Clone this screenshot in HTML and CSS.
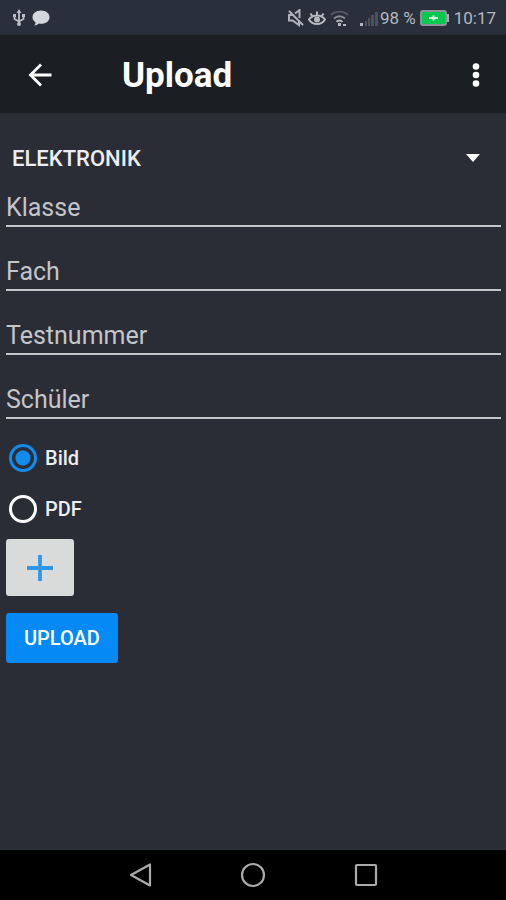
FILE: index.html
```html
<!DOCTYPE html>
<html lang="de">
<head>
<meta charset="utf-8">
<meta name="viewport" content="width=device-width, initial-scale=1">
<title>Upload</title>
<link rel="stylesheet" href="styles.css">
</head>
<body>
<div class="status">
  <svg class="usb" width="14" height="18" viewBox="0 0 14 18" fill="none" stroke="#b9bdc5" stroke-width="1.800" aria-hidden="true"><path d="M7 3v12M2.500 7v3L7 12.500l4.500-2.500V6"/><path d="M7 0l2.500 4h-5zM1 5h3v3H1zM10 5h3v3h-3z" fill="#b9bdc5" stroke="none"/><circle cx="7" cy="15" r="2" fill="#b9bdc5" stroke="none"/></svg>
  <svg width="18" height="18" viewBox="0 0 18 18" fill="#d3d6dc" aria-hidden="true"><path d="M9 1.500c5 0 8.500 2.800 8.500 6.700 0 3.800-3.500 6.500-8.200 6.500-1 0-1.800-.1-2.600-.3-1.200 1.300-2.600 2-4.300 2 .8-.9 1.200-2 1-3.300C1.500 11.900.5 10.200.5 8.200.5 4.300 4.100 1.500 9 1.500z"/></svg>
  <span class="spacer"></span>
  <svg width="18" height="18" viewBox="0 0 18 18" fill="none" stroke="#aeb2ba" stroke-width="2" aria-hidden="true"><path d="M2 2l14 14M5.500 6H2v5.500h3.500l6.500 4.500v-4M8 4.500L12.500 1v8"/></svg>
  <svg class="eye" width="18" height="18" viewBox="0 0 18 18" fill="none" stroke="#b4b8bf" stroke-width="2" aria-hidden="true"><path d="M1 10.500C4.500 5 13.500 5 17 10.500 13.500 16.500 4.500 16.500 1 10.500zM9 6V2.500M4.500 7.500L2.500 4.500M13.500 7.500l2-3"/><circle cx="9" cy="10.500" r="3" fill="#b4b8bf" stroke="none"/></svg>
  <svg class="wifi" width="20" height="18" viewBox="0 0 20 18" fill="none" stroke-width="1.800" aria-hidden="true"><path d="M1 6c4.500-4.500 12.500-4.500 17 0" stroke="#565b65"/><path d="M4 9.500c3-3 8-3 11 0" stroke="#858a93"/><path d="M6.500 13c1.500-2 4.500-2 6 0" stroke="#b4b8bf"/><path d="M8 14h3v3H8zM13 15h3v2h-3z" fill="#b4b8bf"/></svg>
  <svg class="signal" width="18" height="18" viewBox="0 0 18 18" aria-hidden="true"><path d="M0 14h3v3H0z" fill="#b4b8bf"/><path d="M5 12h2v5H5zM8 9h2v8H8zM11 6h3v11h-3zM15 3h3v14h-3z" fill="#4c515b"/></svg>
  <span class="percent">98 %</span>
  <svg class="battery" width="29" height="16" viewBox="0 0 29 16" aria-hidden="true"><rect x="1" y="1" width="25" height="14" rx="2" fill="#08c84f" stroke="#8d9199" stroke-width="2"/><path d="M27 4h2v8h-2z" fill="#a8acb4"/><path d="M9 8h9M13.500 5.500v5" stroke="#d8ffe2" stroke-width="2"/></svg>
  <span class="clock">10:17</span>
</div>
<header class="bar">
  <button class="icon" type="button" aria-label="Zurück"><svg width="24" height="24" viewBox="0 0 24 24" fill="none" stroke="#fff" stroke-width="2.800"><path d="M23.500 12H2.500M13 1.500L2.500 12 13 22.500"/></svg></button>
  <h1>Upload</h1>
  <button class="icon" type="button" aria-label="Menü"><svg width="8" height="26" viewBox="0 0 8 26" fill="#fff"><circle cx="4" cy="4.500" r="3.300"/><circle cx="4" cy="13" r="3.300"/><circle cx="4" cy="21.500" r="3.300"/></svg></button>
</header>
<main>
  <form>
    <div class="picker">
      <select aria-label="Abteilung"><option>ELEKTRONIK</option></select>
      <svg class="caret" width="14" height="8" viewBox="0 0 14 8" fill="#fff" aria-hidden="true"><path d="M0 0h14L7 8z"/></svg>
    </div>
    <div class="fields">
      <input type="text" placeholder="Klasse" aria-label="Klasse">
      <input type="text" placeholder="Fach" aria-label="Fach">
      <input type="text" placeholder="Testnummer" aria-label="Testnummer">
      <input type="text" placeholder="Schüler" aria-label="Schüler">
    </div>
    <div class="choices">
      <label><input type="radio" name="format" checked>Bild</label>
      <label><input type="radio" name="format">PDF</label>
    </div>
    <div class="actions">
      <button class="add" type="button" aria-label="Datei hinzufügen"><svg width="28" height="28" viewBox="0 0 28 28" stroke="#2c98e6" stroke-width="3.800"><path d="M14 1v26M1 14h26"/></svg></button>
      <button class="send" type="button">UPLOAD</button>
    </div>
  </form>
</main>
<nav>
  <button type="button" aria-label="Zurück"><svg width="24" height="26" viewBox="0 0 24 26"><path d="M22 2.500v21L3 13z"/></svg></button>
  <button type="button" aria-label="Startseite"><svg width="26" height="26" viewBox="0 0 26 26"><circle cx="13" cy="13" r="11"/></svg></button>
  <button type="button" aria-label="Übersicht"><svg width="24" height="26" viewBox="0 0 24 26"><rect x="2" y="3" width="20" height="20" rx="1"/></svg></button>
</nav>
</body>
</html>
```
FILE: styles.css
```css
* { box-sizing: border-box; }
body {
  margin: 0;
  min-height: 100vh;
  display: flex;
  flex-direction: column;
  background: #2a2d36;
  color: #eceef1;
  font-family: Roboto, "Liberation Sans", sans-serif;
}
button, input, select { font: inherit; color: inherit; }
button { border: 0; padding: 0; background: none; }
svg { display: block; flex: none; }

.status {
  display: flex;
  align-items: center;
  height: 35px;
  padding: 0 10px 0 12px;
  background: #2a303b;
  color: #b4b8bf;
  font-size: 17px;
}
.usb { margin-right: 6px; }
.spacer { flex: 1; }
.eye { margin-left: 3px; }
.wifi { margin-left: 4px; }
.signal { margin-left: 10px; }
.percent { margin-left: 2px; white-space: nowrap; }
.battery { margin: 0 5px 0 4px; }

.bar {
  display: flex;
  align-items: center;
  height: 78px;
  padding: 2px 26px 0 28px;
  background: #1b1e22;
}
.bar h1 {
  flex: 1;
  margin: 0 0 0 70px;
  color: #fff;
  font-size: 35px;
  font-weight: 700;
}

main { flex: 1; padding: 16px 5px 16px 6px; }
.picker { display: grid; align-items: center; }
.picker > * { grid-area: 1 / 1; }
.picker select {
  appearance: none;
  width: 100%;
  height: 58px;
  padding: 0 40px 0 6px;
  border: 0;
  background: none;
  font-size: 22px;
  font-weight: 500;
}
.caret { justify-self: end; margin-right: 21px; pointer-events: none; }

.fields { display: grid; gap: 24px; }
.fields input {
  width: 100%;
  height: 40px;
  padding: 2px 0 0;
  border: 0;
  border-bottom: 2px solid #c3c5c9;
  background: none;
  font-size: 25px;
}
.fields input::placeholder { color: #c3c5c9; opacity: 1; }

.choices { margin-top: 13px; }
.choices label {
  display: flex;
  align-items: center;
  gap: 8px;
  height: 51px;
  font-size: 20px;
  font-weight: 500;
}
.choices input {
  appearance: none;
  width: 28px;
  height: 28px;
  margin: 0 0 0 3px;
  border: 3px solid #fff;
  border-radius: 50%;
}
.choices input:checked {
  border-color: #118bec;
  background: radial-gradient(circle, #118bec 7px, transparent 8px);
}

.actions {
  display: flex;
  flex-direction: column;
  align-items: flex-start;
  gap: 17px;
  margin-top: 5px;
}
.add {
  display: grid;
  place-items: center;
  width: 68px;
  height: 57px;
  border-radius: 3px;
  background: #d9dbda;
}
.send {
  height: 50px;
  padding: 0 18px;
  border-radius: 3px;
  background: #0589f5;
  color: #fff;
  font-size: 20px;
  font-weight: 500;
}

nav {
  display: flex;
  justify-content: center;
  gap: 88px;
  height: 50px;
  background: #000;
}
nav svg { fill: none; stroke: #aaa; stroke-width: 2.2; stroke-linejoin: round; }
```
